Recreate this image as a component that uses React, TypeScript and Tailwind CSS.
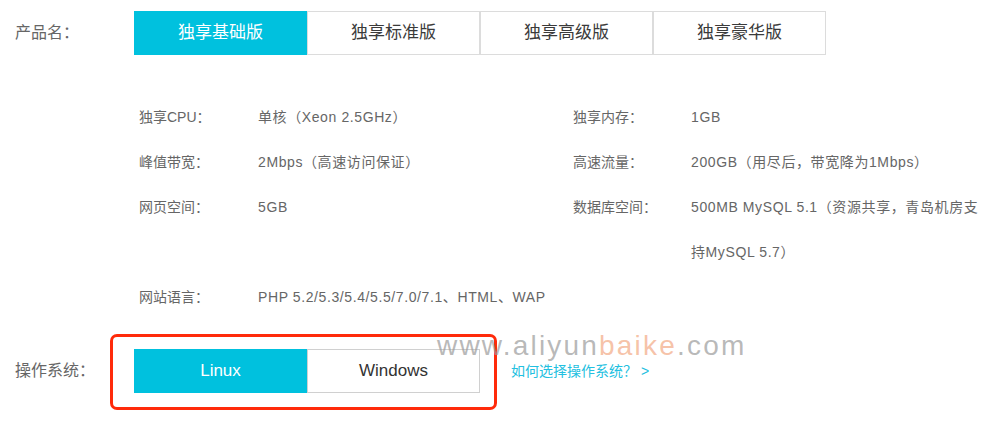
import React from "react";

const font = { fontFamily: '"Liberation Sans", "Noto Sans CJK SC", sans-serif' };

const tabs = ["独享基础版", "独享标准版", "独享高级版", "独享豪华版"];

const specs: [string, React.ReactNode, string, React.ReactNode][] = [
  ["独享CPU：", "单核（Xeon 2.5GHz）", "独享内存：", "1GB"],
  ["峰值带宽：", "2Mbps（高速访问保证）", "高速流量：", "200GB（用尽后，带宽降为1Mbps）"],
  ["网页空间：", "5GB", "数据库空间：", "500MB MySQL 5.1（资源共享，青岛机房支持MySQL 5.7）"],
  ["网站语言：", "PHP 5.2/5.3/5.4/5.5/7.0/7.1、HTML、WAP", "", ""],
];

export default function App() {
  return (
    <div className="relative w-[1000px] h-[444px] bg-white overflow-hidden" style={font}>
      {/* product row */}
      <div className="flex items-center pt-[11px]">
        <div className="w-[134px] pl-[15px] text-[16px] text-[#666]">产品名：</div>
        <div className="flex">
          {tabs.map((t, i) => (
            <div
              key={t}
              className={
                i === 0
                  ? "w-[173px] h-[44px] flex items-center justify-center bg-[#00c1de] text-white text-[17px]"
                  : "w-[173px] h-[44px] flex items-center justify-center border border-[#dcdcdc] bg-white text-[#3a3a3a] text-[17px]"
              }
            >
              {t}
            </div>
          ))}
        </div>
      </div>

      {/* specs */}
      <div className="mt-[40px] ml-[139px] grid grid-cols-[434px_1fr] text-[14px] leading-[45px] text-[#666]">
        {specs.map(([l1, v1, l2, v2]) => (
          <React.Fragment key={l1}>
            <div className="flex">
              <div className="w-[119px] shrink-0">{l1}</div>
              <div className="tracking-[0.6px]">{v1}</div>
            </div>
            <div className="flex">
              <div className="w-[118px] shrink-0">{l2}</div>
              <div className="w-[296px] tracking-[0.6px]">{v2}</div>
            </div>
          </React.Fragment>
        ))}
      </div>

      {/* OS row */}
      <div className="flex items-center mt-[29px]">
        <div className="w-[134px] pl-[15px] text-[16px] text-[#666]">操作系统：</div>
        <div className="flex">
          <div className="w-[173px] h-[44px] flex items-center justify-center bg-[#00c1de] text-white text-[17px]">
            Linux
          </div>
          <div className="w-[173px] h-[44px] flex items-center justify-center border border-[#d0d0d0] bg-white text-[#333] text-[17px]">
            Windows
          </div>
        </div>
        <div className="ml-[31px] text-[14px] text-[#22c0e0]">如何选择操作系统？ &gt;</div>
      </div>

      {/* red annotation box */}
      <div className="absolute left-[110px] top-[334px] w-[387px] h-[76px] border-[3px] border-[#ff2a0a] rounded-[7px] pointer-events-none" />

      {/* watermark */}
      <div
        className="absolute left-[437px] top-[328px] text-[28px] tracking-[2.2px] leading-[36px] pointer-events-none whitespace-nowrap"
        style={{ fontFamily: '"Liberation Sans", sans-serif' }}
      >
        <span className="text-[#9a9a9a]/70">www.aliyun</span>
        <span className="text-[#f2a882]/70">baike</span>
        <span className="text-[#9a9a9a]/70">.com</span>
      </div>
    </div>
  );
}
